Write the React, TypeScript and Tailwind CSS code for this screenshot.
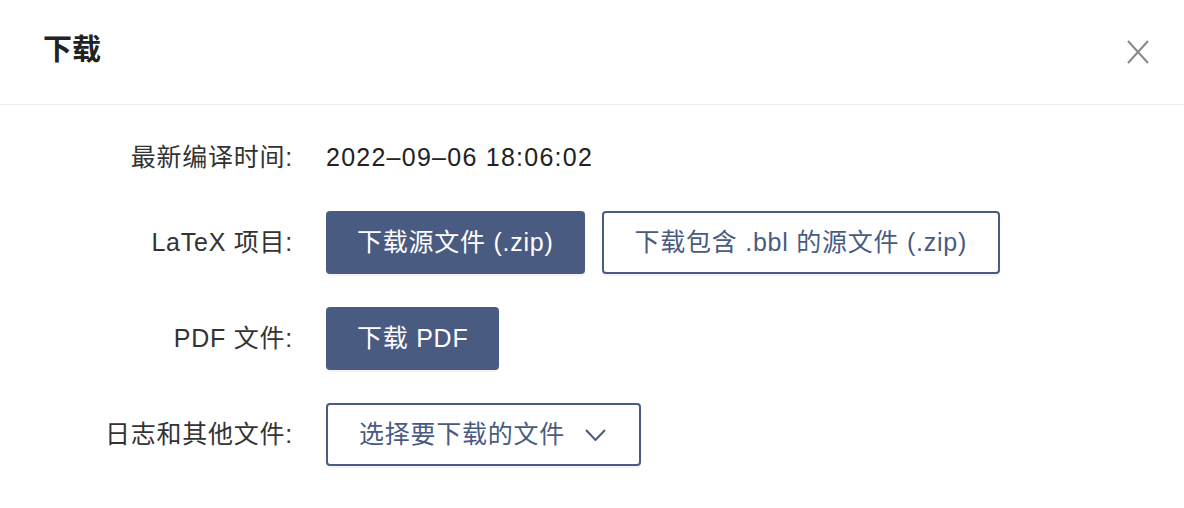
const font = { fontFamily: '"Liberation Sans", "Noto Sans CJK SC", sans-serif' };

function Label({ children }: { children: React.ReactNode }) {
  return (
    <div className="w-[293px] shrink-0 text-right text-[25px] tracking-[0.03em] text-[#333]">{children}</div>
  );
}

const btn = 'h-[63px] rounded-[4px] text-[25px] tracking-[0.03em] shadow-[0_2px_2px_rgba(0,0,0,0.05)]';

export default function App() {
  return (
    <div className="w-[1184px] h-[508px] bg-white" style={font}>
      <div className="h-[105px] flex items-center justify-between pl-[43px] pr-[34px] border-b border-[#ededed]">
        <h2 className="text-[29px] font-semibold text-[#222] -mt-[2px]">下载</h2>
        <button className="w-[24px] h-[24px] flex items-center justify-center text-[#888]">
          <svg width="22" height="24" viewBox="0 0 22 24" fill="none" stroke="currentColor" strokeWidth="2">
            <path d="M1 1 L21 23 M21 1 L1 23" />
          </svg>
        </button>
      </div>

      <div className="flex flex-col pt-[21px]">
        <div className="flex items-center h-[63px] gap-[33px]">
          <Label>最新编译时间:</Label>
          <span className="text-[25px] tracking-[0.05em] text-[#222]">2022–09–06 18:06:02</span>
        </div>

        <div className="flex items-center h-[63px] gap-[33px] mt-[22px]">
          <Label>LaTeX 项目:</Label>
          <div className="flex gap-[17px]">
            <button className={`${btn} px-[31px] bg-[#4a5b82] text-white`}>下载源文件 (.zip)</button>
            <button className={`${btn} px-[31px] border-2 border-[#4a5b82] bg-white text-[#4a5b82]`}>
              下载包含 .bbl 的源文件 (.zip)
            </button>
          </div>
        </div>

        <div className="flex items-center h-[63px] gap-[33px] mt-[33px]">
          <Label>PDF 文件:</Label>
          <button className={`${btn} px-[31px] bg-[#4a5b82] text-white`}>下载 PDF</button>
        </div>

        <div className="flex items-center h-[63px] gap-[33px] mt-[33px]">
          <Label>日志和其他文件:</Label>
          <button
            className={`${btn} pl-[31px] pr-[33px] border-2 border-[#4a5b82] bg-white text-[#4a5b82] flex items-center gap-[20px]`}
          >
            选择要下载的文件
            <svg width="21" height="12" viewBox="0 0 21 12" fill="none" stroke="currentColor" strokeWidth="2">
              <path d="M1 1 L10.5 11 L20 1" />
            </svg>
          </button>
        </div>
      </div>
    </div>
  );
}
